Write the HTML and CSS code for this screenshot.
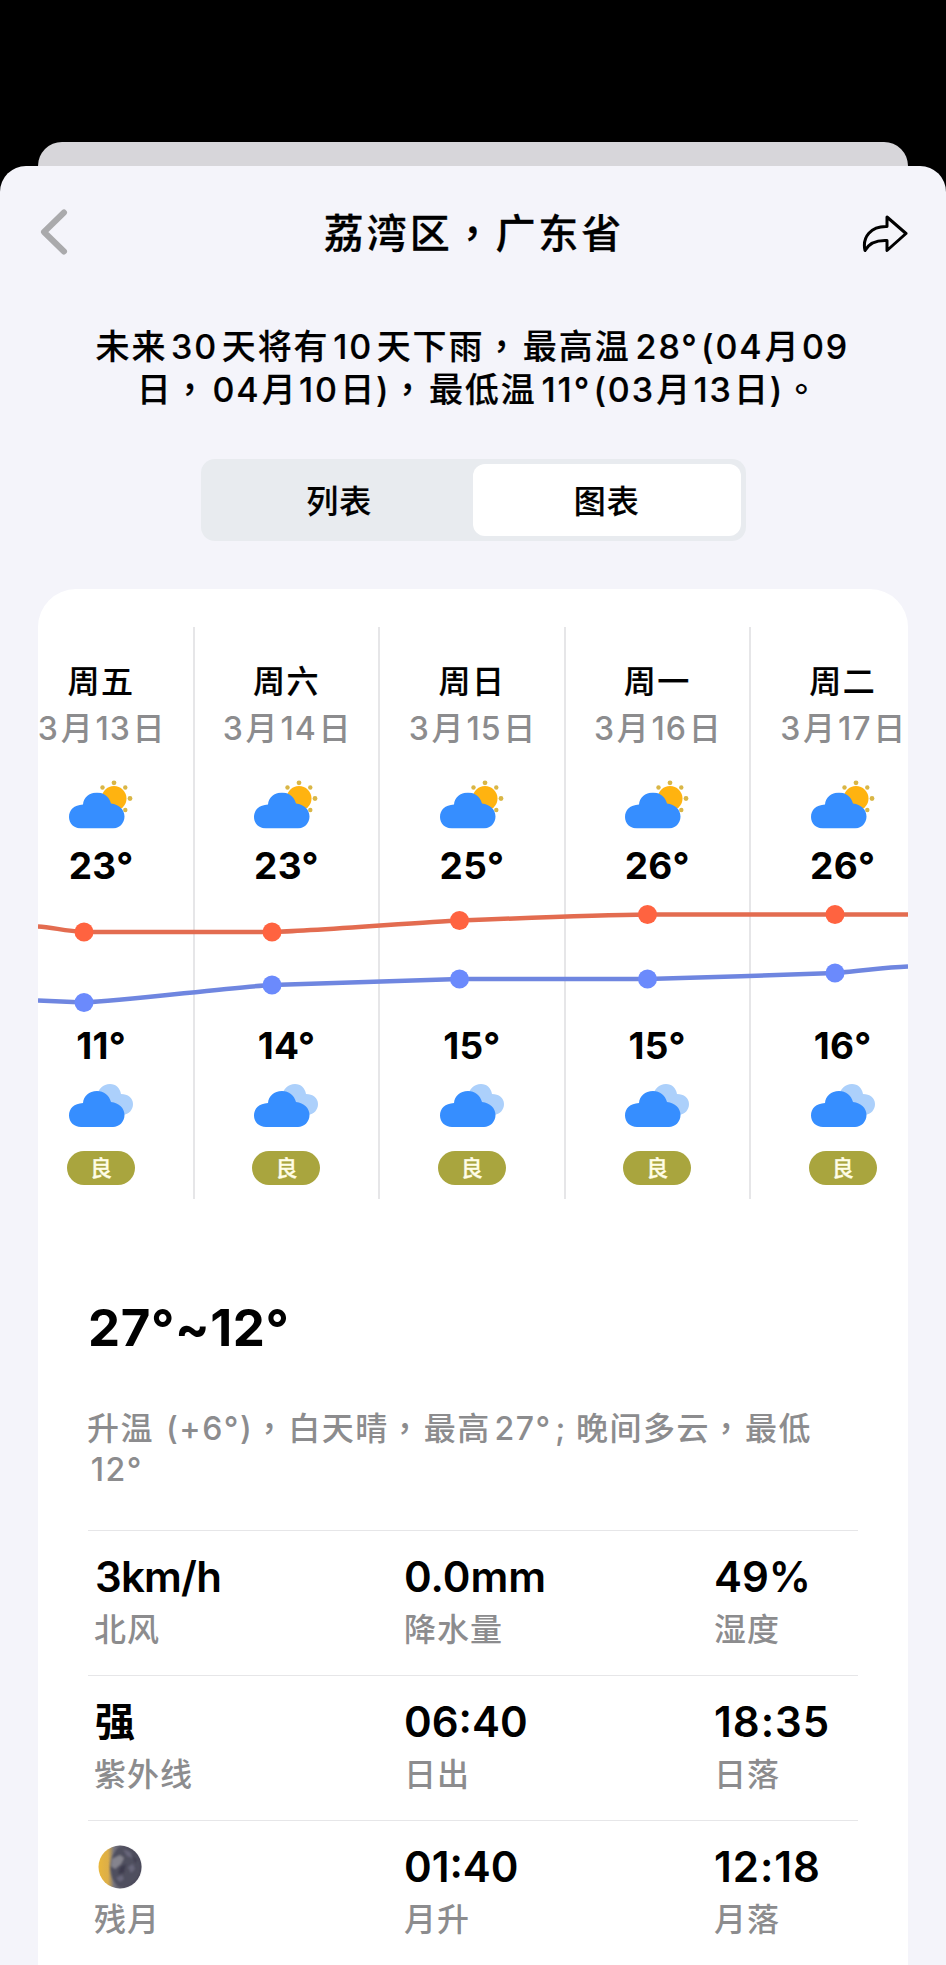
FILE: index.html
```html
<!DOCTYPE html>
<html lang="zh-CN">
<head>
	<meta charset="UTF-8">
	<title>荔湾区，广东省</title>
	<link rel="stylesheet" href="styles.css">
</head>
<body>
<!-- 图标 -->
<svg class="defs" width="0" height="0">
	<symbol id="cloud" viewBox="0 0 56 36">
		<path d="M12 36C5 36 0 31 0 24.500C0 17.500 5 12.500 14 12C14.500 5 20 0 28 0C35 0 40 4 42 11C50 12 55.500 17 55.500 24C55.500 31 50 36 44 36Z"/>
	</symbol>
	<symbol id="day" viewBox="0 0 64 50">
		<g fill="#d9b646">
			<circle cx="45" cy="2.800" r="2.400"/>
			<circle cx="33.500" cy="7.500" r="2.200"/>
			<circle cx="56.300" cy="7.500" r="2.200"/>
			<circle cx="61" cy="18.500" r="2.400"/>
			<circle cx="56.300" cy="30" r="2.200"/>
		</g>
		<circle cx="45" cy="18.500" r="12.500" fill="#ffb310"/>
		<use href="#cloud" x="0" y="12.500" width="56" height="36" fill="#368eff"/>
	</symbol>
	<symbol id="night" viewBox="0 0 64 44">
		<path fill="#acd0fb" d="M28 12C29 5 34 0 41 0C47 0 51 4 52 10C59 10 64 14 64 20C64 26 60 30 54 31Z"/>
		<use href="#cloud" x="0" y="7" width="56" height="36" fill="#368eff"/>
	</symbol>
</svg>

<div class="back"></div>
<div class="sheet">
	<div class="nav">
		<svg class="nav-back" width="28" height="46" viewBox="0 0 28 46"><path d="M24 3.500L4 23L24 42.500" fill="none" stroke="#aaaaac" stroke-width="6" stroke-linecap="round" stroke-linejoin="round"/></svg>
		<h1>荔湾区<i lang="zh-TW">，</i>广东省</h1>
		<svg class="nav-share" width="46" height="38" viewBox="0 0 46 38"><path d="M25 2L44 18.500L25 35.500V25.500C14 25 7 28 3 35.500C0 22 9 11 25 11.500Z" fill="none" stroke="#000" stroke-width="3" stroke-linejoin="round"/></svg>
	</div>

	<p class="summary">未来<b>30</b>天将有<b>10</b>天下雨<i lang="zh-TW">，</i>最高温<b class="t">28°</b><b class="d">(04</b>月<b class="d">09</b><br>日<i lang="zh-TW">，</i><b class="d">04</b>月<b class="d">10</b>日)<i lang="zh-TW">，</i>最低温<b class="t">11°</b><b class="d">(03</b>月<b class="d">13</b>日)<i class="end" lang="zh-TW">。</i></p>

	<div class="tabs">
		<a class="tab">列表</a>
		<a class="tab current">图表</a>
	</div>

	<div class="card">
		<div class="days">
			<div class="day">
				<div class="week">周五</div>
				<div class="date">3<em>月</em>13<em>日</em></div>
				<svg class="icon" width="64" height="50"><use href="#day"/></svg>
				<div class="temp high">23°</div>
				<div class="temp low">11°</div>
				<svg class="icon" width="64" height="44"><use href="#night"/></svg>
				<div class="air">良</div>
			</div>
			<div class="day">
				<div class="week">周六</div>
				<div class="date">3<em>月</em>14<em>日</em></div>
				<svg class="icon" width="64" height="50"><use href="#day"/></svg>
				<div class="temp high">23°</div>
				<div class="temp low">14°</div>
				<svg class="icon" width="64" height="44"><use href="#night"/></svg>
				<div class="air">良</div>
			</div>
			<div class="day">
				<div class="week">周日</div>
				<div class="date">3<em>月</em>15<em>日</em></div>
				<svg class="icon" width="64" height="50"><use href="#day"/></svg>
				<div class="temp high">25°</div>
				<div class="temp low">15°</div>
				<svg class="icon" width="64" height="44"><use href="#night"/></svg>
				<div class="air">良</div>
			</div>
			<div class="day">
				<div class="week">周一</div>
				<div class="date">3<em>月</em>16<em>日</em></div>
				<svg class="icon" width="64" height="50"><use href="#day"/></svg>
				<div class="temp high">26°</div>
				<div class="temp low">15°</div>
				<svg class="icon" width="64" height="44"><use href="#night"/></svg>
				<div class="air">良</div>
			</div>
			<div class="day">
				<div class="week">周二</div>
				<div class="date">3<em>月</em>17<em>日</em></div>
				<svg class="icon" width="64" height="50"><use href="#day"/></svg>
				<div class="temp high">26°</div>
				<div class="temp low">16°</div>
				<svg class="icon" width="64" height="44"><use href="#night"/></svg>
				<div class="air">良</div>
			</div>
			<!-- 温度曲线 -->
			<svg class="chart" width="870" height="120" viewBox="0 0 870 120">
				<g fill="none" stroke-width="4.500">
					<path stroke="#e36c50" d="M0 26.500C14 27 26 31 46 32H234C270 31.500 385 22 421.500 20.500C460 19 570 15 609.500 14.500H870"/>
					<path stroke="#6f86e0" d="M0 100.500L46 102.500C85 101 195 87 234 85C272 84 383 80 421.500 79H609.500C648 78 759 74.500 797 73C825 71 845 67.500 870 66.500"/>
				</g>
				<g fill="#ff6340">
					<circle cx="46" cy="32" r="9.500"/>
					<circle cx="234" cy="32" r="9.500"/>
					<circle cx="421.500" cy="20.500" r="9.500"/>
					<circle cx="609.500" cy="14.500" r="9.500"/>
					<circle cx="797" cy="14.500" r="9.500"/>
				</g>
				<g fill="#6b8afc">
					<circle cx="46" cy="102.500" r="9.500"/>
					<circle cx="234" cy="85" r="9.500"/>
					<circle cx="421.500" cy="79" r="9.500"/>
					<circle cx="609.500" cy="79" r="9.500"/>
					<circle cx="797" cy="73" r="9.500"/>
				</g>
			</svg>
		</div>

		<div class="detail">
			<h2>27°~12°</h2>
			<p class="desc">升温<span class="up">(+6°)</span><i lang="zh-TW">，</i>白天晴<i lang="zh-TW">，</i>最高<b>27°</b><span class="semi">;</span>晚间多云<i lang="zh-TW">，</i>最低<br><b>12°</b></p>
			<div class="row">
				<div class="cell"><strong class="wind">3km/h</strong><span>北风</span></div>
				<div class="cell"><strong>0.0mm</strong><span>降水量</span></div>
				<div class="cell"><strong>49%</strong><span>湿度</span></div>
			</div>
			<div class="row">
				<div class="cell"><strong class="cn">强</strong><span>紫外线</span></div>
				<div class="cell"><strong>06:40</strong><span>日出</span></div>
				<div class="cell"><strong class="time">18:35</strong><span>日落</span></div>
			</div>
			<div class="row">
				<div class="cell">
					<strong><svg class="moon" width="44" height="44" viewBox="0 0 44 44">
						<defs>
							<linearGradient id="lit"><stop offset="0" stop-color="#e9b73c"/><stop offset=".22" stop-color="#dcae48"/><stop offset=".36" stop-color="#77757f"/><stop offset=".6" stop-color="#504f5f"/><stop offset="1" stop-color="#454456"/></linearGradient>
							<filter id="soft"><feGaussianBlur stdDeviation="1"/></filter>
						</defs>
						<circle cx="22" cy="22" r="21.500" fill="url(#lit)"/>
						<g filter="url(#soft)">
							<path d="M21 2C10 12 9 32 21 42C32 43 42 34 42.500 22C42 10 32 2 21 2Z" fill="#504f5f"/>
							<path d="M14 14L22 10L26 13L23 19L17 24L13 21Z" fill="#85848e"/>
							<path d="M25 4L32 7L35 13L29 11ZM30 22L35 19L37 24L33 28ZM18 33L24 30L26 34L22 37Z" fill="#67667a"/>
							<path d="M22 22L28 19L26 28L20 29ZM34 9L39 15L37 18Z" fill="#3c3b4d"/>
						</g>
					</svg></strong>
					<span>残月</span>
				</div>
				<div class="cell"><strong>01:40</strong><span>月升</span></div>
				<div class="cell"><strong class="time">12:18</strong><span>月落</span></div>
			</div>
		</div>
	</div>
</div>
</body>
</html>
```
FILE: styles.css
```css
*{
	margin: 0;
	padding: 0;
	box-sizing: border-box;
}
body{
	height: 1965px;
	padding-top: 142px;
	overflow: hidden;
	background: #000;
	color: #000;
	font-family: Inter, "Noto Sans CJK SC", sans-serif;
	font-weight: 500;
}
/* 居中的标点 */
i{
	font-style: normal;
	font-family: "Noto Sans CJK TC", sans-serif;
	line-height: 0;
}
em{
	font-style: normal;
	margin: 0 1.8px;
}
b{
	font-weight: inherit;
	margin: 0 3.7px;
}
svg{
	display: block;
}
.defs{
	position: absolute;
}
.back{
	height: 24px;
	margin: 0 38px;
	background: #d7d6da;
	border-radius: 24px 24px 0 0;
}
.sheet{
	height: 1799px;
	background: #f4f4fa;
	border-radius: 26px 26px 0 0;
	overflow: hidden;
}
.nav{
	display: flex;
	justify-content: space-between;
	align-items: center;
	height: 132px;
	padding: 0 38px 0 40px;
}
.nav h1{
	font-size: 40px;
	line-height: 60px;
	font-weight: 500;
	letter-spacing: 2.9px;
	padding: 4px 0 0 18px;
	-webkit-text-stroke: .3px #000;
}
.nav-share{
	margin-top: 4px;
}
.summary{
	height: 160px;
	padding-top: 28px;
	font-size: 34px;
	line-height: 42.5px;
	letter-spacing: 1.9px;
	text-align: center;
	white-space: nowrap;
	-webkit-text-stroke: .2px #000;
}
.summary i{
	margin-right: 2.5px;
}
.summary .d{
	margin: 0 1.3px;
}
.summary .t{
	margin: 0 1px 0 5px;
}
.summary .end{
	margin-right: -11px;
}
/* 切换按钮 */
.tabs{
	display: flex;
	width: 545px;
	height: 82px;
	margin: 1px auto 0;
	padding: 5px;
	background: #e8ebef;
	border-radius: 14px;
}
.tab{
	flex: 1;
	font-size: 32px;
	line-height: 75px;
	letter-spacing: 1px;
	text-align: center;
	-webkit-text-stroke: .2px #000;
}
.tab.current{
	background: #fff;
	border-radius: 12px;
}
.card{
	height: 1400px;
	margin: 48px 38px 0;
	padding-top: 38px;
	background: #fff;
	border-radius: 38px 38px 0 0;
	overflow: hidden;
}
.days{
	display: flex;
	position: relative;
	height: 572px;
	margin-left: -28.6px;
}
.day{
	display: flex;
	flex: none;
	flex-direction: column;
	align-items: center;
	width: 185.4px;
	padding-top: 33px;
	border-right: 2px solid #e6e6e8;
}
.day:nth-child(5){
	border-right: 0;
	padding-right: 2px;
}
.week{
	font-size: 32px;
	line-height: 44px;
	letter-spacing: 1.5px;
	-webkit-text-stroke: .2px #000;
}
.date{
	margin-top: 3px;
	padding-left: 3px;
	color: #8c8c8e;
	font-size: 32px;
	line-height: 44px;
	letter-spacing: 1px;
	white-space: nowrap;
}
.icon{
	flex: none;
}
.date + .icon{
	margin-top: 29px;
}
.temp{
	font-size: 37px;
	line-height: 44px;
	font-weight: 700;
	letter-spacing: .3px;
}
.high{
	margin-top: 14px;
}
.low{
	margin-top: 136px;
	margin-bottom: 16px;
}
.air{
	width: 68px;
	height: 34px;
	margin-top: 23px;
	background: #a9a53e;
	border-radius: 17px;
	color: #fffde6;
	font-size: 22px;
	line-height: 35px;
	text-align: center;
	-webkit-text-stroke: .3px #fffde6;
}
.chart{
	position: absolute;
	left: 28.6px;
	top: 273px;
}
.detail{
	padding: 94px 50px 0;
}
.detail h2{
	font-size: 51px;
	line-height: 70px;
	font-weight: 700;
	letter-spacing: .6px;
}
.desc{
	height: 140px;
	margin: 27px 0 0 -1px;
	padding-top: 19px;
	color: #8c8c8e;
	font-size: 32px;
	line-height: 40.5px;
	letter-spacing: 1.5px;
	white-space: nowrap;
}
.desc i{
	margin-right: 1.5px;
}
.up{
	padding-left: 12px;
}
.semi{
	margin-right: 9px;
}
.row{
	display: grid;
	grid-template-columns: 309px 310px 1fr;
	height: 145px;
	padding: 21px 7px 0;
	border-top: 1px solid #e6e6e8;
}
.cell strong{
	display: block;
	height: 50px;
	font-size: 42px;
	line-height: 50px;
	font-weight: 600;
}
.cell strong.wind{
	letter-spacing: -.8px;
}
.cell strong.time{
	letter-spacing: 1px;
}
.cell strong.cn{
	font-size: 40px;
}
.cell span{
	display: block;
	margin: 6px 0 0;
	color: #8c8c8e;
	font-size: 32px;
	line-height: 44px;
	letter-spacing: 1px;
}
.cell:first-child span{
	margin-left: -1px;
}
.moon{
	position: relative;
	top: 3px;
	margin-left: 3px;
}
```
